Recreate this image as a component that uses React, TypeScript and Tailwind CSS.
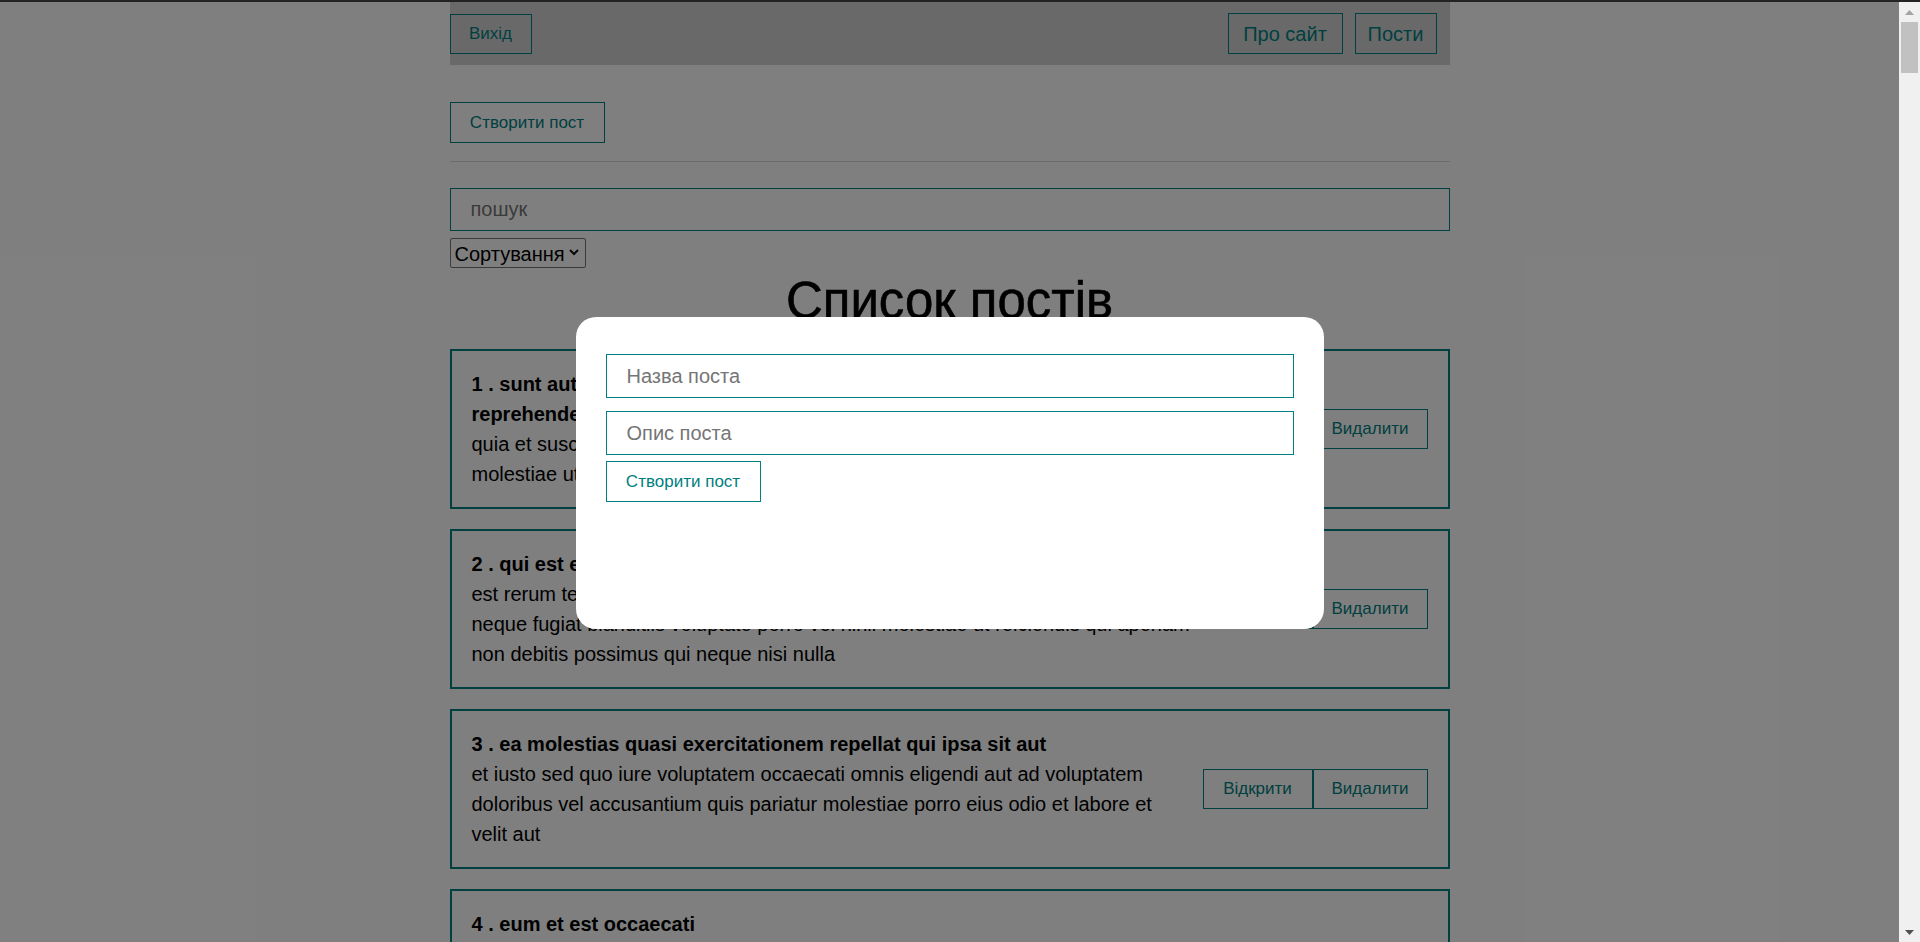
import { useState } from 'react';

type Post = { id: number; title: string; body: string };

const posts: Post[] = [
  {
    id: 1,
    title: 'sunt aut facere repellat provident occaecati excepturi optio reprehenderit',
    body: 'quia et suscipit suscipit recusandae consequuntur expedita et cum reprehenderit molestiae ut ut quas totam nostrum rerum est autem sunt rem eveniet architecto',
  },
  {
    id: 2,
    title: 'qui est esse',
    body: 'est rerum tempore vitae sequi sint nihil reprehenderit dolor beatae ea dolores neque fugiat blanditiis voluptate porro vel nihil molestiae ut reiciendis qui aperiam non debitis possimus qui neque nisi nulla',
  },
  {
    id: 3,
    title: 'ea molestias quasi exercitationem repellat qui ipsa sit aut',
    body: 'et iusto sed quo iure voluptatem occaecati omnis eligendi aut ad voluptatem doloribus vel accusantium quis pariatur molestiae porro eius odio et labore et velit aut',
  },
  {
    id: 4,
    title: 'eum et est occaecati',
    body: 'ullam et saepe reiciendis voluptatem adipisci sit amet autem assumenda provident rerum culpa quis hic commodi nesciunt rem tenetur doloremque ipsam iure quis sunt voluptatem rerum illo velit',
  },
  {
    id: 5,
    title: 'nesciunt quas odio',
    body: 'repudiandae veniam quaerat sunt sed alias aut fugiat sit autem sed est voluptatem omnis possimus esse voluptatibus quis est aut tenetur dolor neque',
  },
];

function PostItem({ post }: { post: Post }) {
  return (
    <div className="flex items-center border-2 border-[#008080] px-[20px] py-[18px]">
      <div className="w-[720px] text-[20px] leading-[30px]">
        <strong className="block font-bold">
          {post.id} . {post.title}
        </strong>
        <div>{post.body}</div>
      </div>
      <div className="ml-auto flex shrink-0">
        <button className="h-[40px] w-[110px] border border-[#008080] text-[17px] text-[#008080]">Відкрити</button>
        <button className="h-[40px] w-[115px] border border-[#008080] text-[17px] text-[#008080]">Видалити</button>
      </div>
    </div>
  );
}

function Scrollbar() {
  return (
    <div className="flex w-[21px] shrink-0 flex-col bg-[#f0f0f0]">
      <div className="flex h-[20px] items-center justify-center">
        <svg width="9" height="5" viewBox="0 0 9 5">
          <polygon points="0,5 4.5,0 9,5" fill="#a3a3a3" />
        </svg>
      </div>
      <div className="mx-[2px] h-[51px] bg-[#c1c1c1]" />
      <div className="flex-1" />
      <div className="flex h-[20px] items-center justify-center">
        <svg width="9" height="5" viewBox="0 0 9 5">
          <polygon points="0,0 9,0 4.5,5" fill="#505050" />
        </svg>
      </div>
    </div>
  );
}

export default function App() {
  const [modal, setModal] = useState(true);

  return (
    <div className="flex h-screen flex-col overflow-hidden bg-white font-['Liberation_Sans',Arial,sans-serif] text-black">
      <div className="h-[2px] shrink-0 bg-[#232323]" />

      <div className="flex min-h-0 flex-1">
        <div className="relative flex-1 overflow-hidden">
          <div className="mx-auto w-[1000px]">
            {/* Navbar */}
            <div className="flex h-[63px] items-center justify-between bg-[#d3d3d3] pr-[13px]">
              <button className="h-[40px] w-[82px] border border-[#008080] text-[17px] text-[#008080]">Вихід</button>
              <div className="flex gap-[12px]">
                <a className="flex h-[41px] w-[115px] items-center justify-center border border-[#008080] text-[20px] text-[#008080]">
                  Про сайт
                </a>
                <a className="flex h-[41px] w-[82px] items-center justify-center border border-[#008080] text-[20px] text-[#008080]">
                  Пости
                </a>
              </div>
            </div>

            <button
              onClick={() => setModal(true)}
              className="mt-[37px] h-[41px] w-[155px] border border-[#008080] text-[17px] text-[#008080]"
            >
              Створити пост
            </button>

            <hr className="mt-[18px] border-[#d8d8d8]" />

            <input
              placeholder="пошук"
              className="mt-[26px] block h-[43px] w-full border border-[#008080] px-[20px] text-[20px] outline-none placeholder:text-[#757575]"
            />
            <div className="relative mt-[7px] w-[136px]">
              <select
                defaultValue=""
                className="block h-[30px] w-full appearance-none rounded-[2px] border border-[#767676] bg-white pl-[4px] text-[20px]"
              >
                <option value="" disabled>
                  Сортування
                </option>
                <option value="title">По назві</option>
                <option value="body">По опису</option>
              </select>
              <svg
                className="pointer-events-none absolute right-[7px] top-[11px]"
                width="10"
                height="7"
                viewBox="0 0 10 7"
                fill="none"
                stroke="#111"
                strokeWidth="2"
              >
                <polyline points="1,1 5,5 9,1" />
              </svg>
            </div>

            <h1 className="mt-[3px] mb-[18px] text-center text-[51px] font-normal leading-[60px] [-webkit-text-stroke:0.6px_black]">
              Список постів
            </h1>

            <div className="flex flex-col gap-[20px] pb-[40px]">
              {posts.map((p) => (
                <PostItem key={p.id} post={p} />
              ))}
            </div>
          </div>

          {/* Modal */}
          {modal && (
            <div
              onClick={() => setModal(false)}
              className="absolute inset-0 flex items-center justify-center bg-black/50 pt-[2px]"
            >
              <div
                onClick={(e) => e.stopPropagation()}
                className="h-[312px] w-[748px] rounded-[20px] bg-white px-[30px] pt-[37px]"
              >
                <input
                  placeholder="Назва поста"
                  className="block h-[44px] w-full border border-[#008080] px-[20px] text-[20px] outline-none placeholder:text-[#757575]"
                />
                <input
                  placeholder="Опис поста"
                  className="mt-[13px] block h-[44px] w-full border border-[#008080] px-[20px] text-[20px] outline-none placeholder:text-[#757575]"
                />
                <button className="mt-[6px] h-[41px] w-[155px] border border-[#008080] text-[17px] text-[#008080]">
                  Створити пост
                </button>
              </div>
            </div>
          )}
        </div>

        <Scrollbar />
      </div>
    </div>
  );
}
